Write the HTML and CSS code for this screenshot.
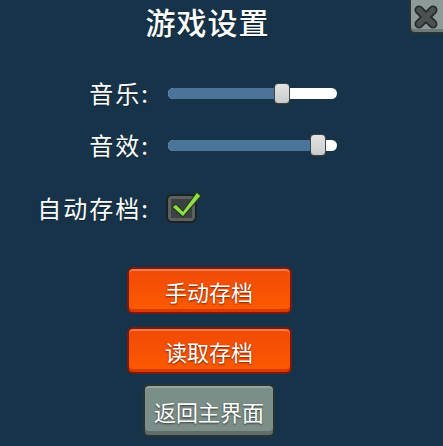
FILE: index.html
```html
<!DOCTYPE html>
<html lang="zh-CN">

<head>
  <meta charset="UTF-8">
  <meta name="viewport" content="width=device-width, initial-scale=1.0">
  <title>游戏设置</title>
  <link rel="stylesheet" href="styles.css">
</head>

<body>
  <div class="panel">
    <!-- Close button in the corner -->
    <button class="close-btn" aria-label="关闭">
      <svg viewBox="0 0 24 24" width="24" height="24">
        <g stroke-linecap="round">
          <path d="M5 5 L19 19 M19 5 L5 19" stroke="#262a2b" stroke-width="9" />
          <path d="M5 5 L19 19 M19 5 L5 19" stroke="#4b5051" stroke-width="5.5" />
        </g>
      </svg>
    </button>

    <h1 class="title">游戏设置</h1>

    <!-- Settings rows -->
    <div class="settings">
      <div class="row">
        <span class="label">音乐:</span>
        <div class="slider">
          <div class="track-fill" style="width: 115px"></div>
          <div class="thumb"></div>
        </div>
      </div>
      <div class="row">
        <span class="label">音效:</span>
        <div class="slider">
          <div class="track-fill" style="width: 151px"></div>
          <div class="thumb"></div>
        </div>
      </div>
      <div class="row row-check">
        <span class="label">自动存档:</span>
        <div class="checkbox">
          <svg viewBox="0 0 30 30" width="30" height="30">
            <path d="M5 15 L12 22 L26 3 L30 7 L12 28 L1 18 Z" fill="#8ee04a" stroke="#2c3a1a"
              stroke-width="1.2" stroke-linejoin="round" />
          </svg>
        </div>
      </div>
    </div>

    <!-- Action buttons -->
    <div class="actions">
      <button class="btn btn-orange">手动存档</button>
      <button class="btn btn-orange">读取存档</button>
      <button class="btn btn-gray">返回主界面</button>
    </div>
  </div>
</body>

</html>
```

FILE: styles.css
```css
/* Game settings panel */
body {
  margin: 0;
  padding: 0;
  background: #163349;
  font-family: 'Noto Sans CJK SC', 'Noto Sans', sans-serif;
  color: #fff;
  overflow: hidden;
}

.panel {
  position: relative;
  width: 443px;
  height: 446px;
}

.title {
  margin: 0;
  padding-top: 1px;
  padding-right: 28px;
  text-align: center;
  font-size: 30px;
  font-weight: 500;
  line-height: 40px;
  letter-spacing: 1px;
  text-shadow: 0 1px 1px rgba(0, 0, 0, 0.4);
}

.close-btn {
  position: absolute;
  top: -6px;
  left: 409px;
  width: 42px;
  height: 40px;
  padding: 6px 8px 0 0;
  background: #8c9b98;
  border: 2px solid #2a3436;
  border-radius: 6px;
  box-shadow: inset 0 -3px 0 #6d7a78;
  display: flex;
  align-items: center;
  justify-content: center;
}

.settings {
  margin-top: 37px;
}

.row {
  display: grid;
  grid-template-columns: 150px auto;
  column-gap: 18px;
  align-items: center;
  height: 30px;
  margin-bottom: 22px;
}

.row-check {
  margin-top: 33px;
}

.label {
  text-align: right;
  font-size: 24px;
  line-height: 30px;
  letter-spacing: 2px;
  text-shadow: 0 1px 1px rgba(0, 0, 0, 0.4);
}

.slider {
  position: relative;
  width: 169px;
  height: 11px;
  background: #fff;
  border-radius: 6px;
}

.track-fill {
  height: 100%;
  background: #4a7499;
  border-radius: 6px 0 0 6px;
}

.thumb {
  position: absolute;
  top: -5px;
  left: 0;
  width: 14px;
  height: 19px;
  margin-left: 106px;
  background: linear-gradient(#e2e4e4, #c9cccc);
  border: 1px solid #3c4446;
  border-radius: 4px;
  box-shadow: 0 1px 0 #2a3032;
}

.row:nth-child(2) .thumb {
  margin-left: 142px;
  top: -6px;
  height: 20px;
}

.checkbox {
  width: 27px;
  height: 25px;
  margin-top: 1px;
  margin-left: -2px;
  background: #3c4142;
  border: 2px solid #1d2122;
  border-radius: 6px;
  box-shadow: inset 0 0 0 3px #5b6162;
  position: relative;
}

.checkbox svg {
  position: absolute;
  top: -7px;
  left: 3px;
}

.actions {
  display: flex;
  flex-direction: column;
  align-items: center;
  gap: 13px;
  width: 418px;
  margin-top: 44px;
}

.btn {
  height: 47px;
  font-family: inherit;
  font-size: 22px;
  color: #fff;
  border-radius: 6px;
  cursor: pointer;
  text-shadow: 0 1px 2px rgba(0, 0, 0, 0.6);
}

.btn-orange {
  width: 165px;
  background: linear-gradient(#f04a06, #fd5a00);
  border: 2px solid #7a1a10;
  box-shadow: inset 0 2px 0 #f37a4a, inset 0 -3px 0 #d83a00;
}

.btn-orange:hover {
  background: #ff6a10;
}

.btn-gray {
  width: 132px;
  height: 53px;
  margin-top: -3px;
  background: #7c8e88;
  border: 2px solid #2b3434;
  box-shadow: inset 0 2px 0 #94a59f, inset 0 -4px 0 #5f6e6a;
}
```
